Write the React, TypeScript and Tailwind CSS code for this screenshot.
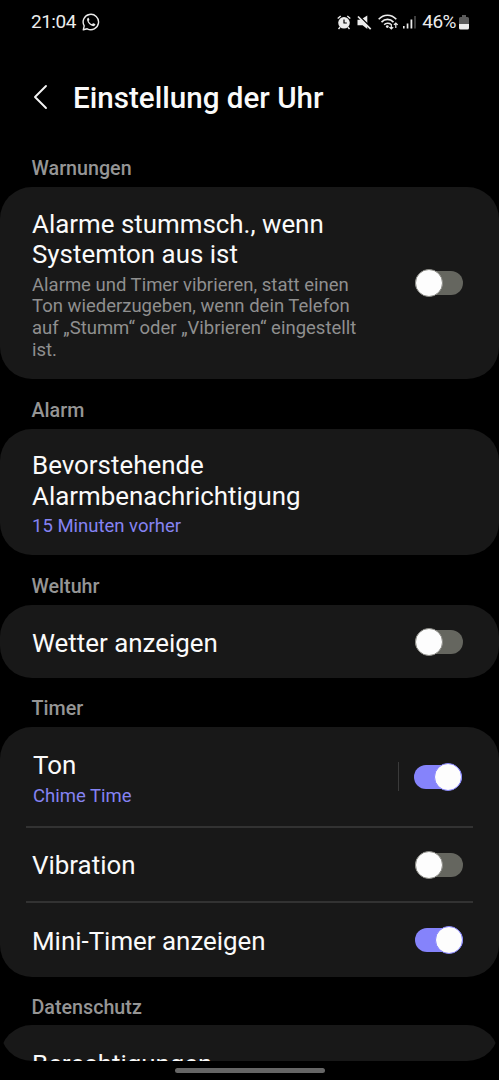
import React from 'react';

interface ToggleProps {
    on?: boolean;
}

const Toggle: React.FC<ToggleProps> = ({ on = false }) => (
    <div
        role="switch"
        aria-checked={on}
        className={`flex h-6 w-12 shrink-0 items-center rounded-full ${on ? 'justify-end bg-[#8583fb]' : 'bg-[#65665f]'}`}
    >
        <div
            className={`size-7 shrink-0 rounded-full border bg-[#fdfdfd] ${on ? 'border-[#8583fb]' : 'border-[#8b8b86]'}`}
        />
    </div>
);

interface SectionProps {
    title: string;
    gap?: string;
    children: React.ReactNode;
}

const Section: React.FC<SectionProps> = ({ title, gap = 'h-[50px]', children }) => (
    <section>
        <h2 className={`flex items-center pl-[31.5px] pt-[13px] text-[19.7px] leading-[24px] font-medium text-[#959595] ${gap}`}>
            {title}
        </h2>
        <div className="rounded-[32px] bg-[#181818]">{children}</div>
    </section>
);

const Title: React.FC<{ children: React.ReactNode }> = ({ children }) => (
    <p className="text-[25.9px] leading-[30.5px] text-[#fafafa]">{children}</p>
);

const StatusBar: React.FC = () => (
    <div className="flex h-[44px] items-center justify-between pl-[31px] pr-[30px] text-[19px] text-[#ececec]">
        <div className="flex items-center gap-[6px]">
            <span className="tracking-[-0.5px]">21:04</span>
            <svg width="18" height="18" viewBox="0 0 18 18" fill="none">
                <path d="M1.3 16.8 2.2 12.9A7.7 7.7 0 1 1 5.2 15.8Z" stroke="currentColor" strokeWidth="1.4" strokeLinejoin="round" />
                <path d="M6.1 4.8c-.9.5-1.2 1.5-.9 2.6.8 2.7 2.8 4.9 5.4 5.7 1.2.3 2.3-.2 2.7-1.3.1-.3 0-.5-.2-.7l-1.7-.9c-.3-.1-.5-.1-.7.2l-.6.8c-1.6-.6-2.9-1.8-3.5-3.3l.6-.7c.2-.2.2-.4.1-.7L6.7 5c-.1-.2-.3-.3-.6-.2Z" fill="currentColor" />
            </svg>
        </div>
        <div className="flex items-center">
            {/* alarm */}
            <svg width="14" height="15" viewBox="0 0 14 15" fill="none" stroke="currentColor">
                <circle cx="7" cy="7.8" r="5.8" fill="currentColor" stroke="none" />
                <path d="M.7 3.5 3.7 1M13.3 3.5 10.3 1M3 12.3 1.5 14M11 12.3l1.5 1.7" strokeWidth="1.4" />
                <path d="M7 4.4V8h2.8" stroke="#000" strokeWidth="1.2" />
            </svg>
            {/* sound off */}
            <svg className="ml-[6px]" width="15" height="15" viewBox="0 0 15 15">
                <path d="M.5 4.8h3L10.3.5v13.6L5.6 10.2H.5Z" fill="currentColor" />
                <path d="M2 .7 14.5 13.2" stroke="#000" strokeWidth="1.6" />
                <path d="M1 1.5 13.7 14.1" stroke="currentColor" strokeWidth="1.7" />
            </svg>
            {/* wifi with traffic arrows */}
            <svg className="ml-[6px]" width="21" height="16" viewBox="0 0 21 16" fill="none" stroke="currentColor" strokeWidth="1.6">
                <path d="M.7 5.3C5.6-.1 13.4-.1 18.3 5.3M3.5 8.1c3.4-3.6 8.6-3.6 12 0M6.2 10.8c1.7-1.8 4.8-2 6.7-.5" />
                <circle cx="9.3" cy="12.6" r="1.4" fill="currentColor" stroke="none" />
                <path d="M13.3 10v5M11.4 13.1l1.9 1.9 1.9-1.9M17.8 14V9M15.9 10.9 17.8 9l1.9 1.9" strokeWidth="1.2" />
            </svg>
            {/* signal strength */}
            <svg className="ml-[4px]" width="14" height="14" viewBox="0 0 14 14" fill="currentColor">
                <rect x="0" y="11" width="1.6" height="2.5" />
                <rect x="3.7" y="8.5" width="1.7" height="5" />
                <rect x="7.5" y="4.5" width="1.8" height="9" />
                <rect x="11.2" y="1" width="1.6" height="12.5" fill="#4c4c4c" />
            </svg>
            <span className="ml-[5px] tracking-[-0.5px]">46%</span>
            {/* battery */}
            <svg className="ml-[3px]" width="10" height="15" viewBox="0 0 10 15">
                <path d="M3 0h4v2h1.5Q10 2 10 3.5V9H0V3.5Q0 2 1.5 2H3Z" fill="#5b5b5b" />
                <path d="M0 9h10v4q0 1.5-1.5 1.5h-7Q0 14.5 0 13Z" fill="currentColor" />
            </svg>
        </div>
    </div>
);

const App: React.FC = () => (
    <div
        lang="de"
        className="flex h-[1080px] w-[499px] flex-col overflow-hidden bg-black font-['Roboto',sans-serif]"
    >
        <StatusBar />

        <header className="flex h-[93px] items-center pt-[13px] pl-[33px]">
            <svg width="15" height="26" viewBox="0 0 15 26" fill="none" stroke="#f4f4f4" strokeWidth="1.9" strokeLinecap="round" strokeLinejoin="round">
                <path d="M13 2 2 13 13 24" />
            </svg>
            <h1 className="ml-[25px] pt-[2px] text-[29.6px] font-medium text-[#fafafa]">Einstellung der Uhr</h1>
        </header>

        <main className="h-[924px] shrink-0 overflow-hidden rounded-b-[32px]">
            <Section title="Warnungen">
                <div className="flex h-[192px] items-center justify-between pl-8 pr-9">
                    <div className="w-[345px] pt-[4px]">
                        <Title>Alarme stummsch., wenn Systemton aus ist</Title>
                        <p className="mt-[5px] text-[18.5px] leading-[21.7px] text-[#8f8f8f]">
                            Alarme und Timer vibrieren, statt einen Ton wiederzugeben, wenn dein Telefon auf „Stumm“ oder „Vibrieren“ eingestellt ist.
                        </p>
                    </div>
                    <Toggle />
                </div>
            </Section>

            <Section title="Alarm">
                <div className="flex h-[126px] flex-col justify-center pt-[3px] pl-8">
                    <Title>
                        Bevorstehende
                        <br />
                        Alarmbenachrichtigung
                    </Title>
                    <p className="mt-[4px] text-[18.5px] leading-[22px] text-[#8583f3]">15 Minuten vorher</p>
                </div>
            </Section>

            <Section title="Weltuhr">
                <div className="flex h-[73px] items-center justify-between pl-8 pr-9">
                    <div className="pt-[3px]">
                        <Title>Wetter anzeigen</Title>
                    </div>
                    <Toggle />
                </div>
            </Section>

            <Section title="Timer" gap="h-[49px]">
                <div className="flex h-[99px] items-center justify-between pl-[33px] pr-[37px]">
                    <div className="pt-[4px]">
                        <Title>Ton</Title>
                        <p className="mt-[4px] text-[18.5px] leading-[22px] text-[#8583f3]">Chime Time</p>
                    </div>
                    <div className="flex items-center">
                        <div className="mr-[15px] h-[29px] w-px bg-[#3a3a3a]" />
                        <Toggle on />
                    </div>
                </div>
                <div className="mx-[26px] h-[2px] bg-[#323232]" />
                <div className="flex h-[73px] items-center justify-between pl-8 pr-9">
                    <div className="pt-[2px]">
                        <Title>Vibration</Title>
                    </div>
                    <Toggle />
                </div>
                <div className="mx-[26px] h-[2px] bg-[#323232]" />
                <div className="flex h-[74px] items-center justify-between pl-8 pr-9">
                    <div className="pt-[2px]">
                        <Title>Mini-Timer anzeigen</Title>
                    </div>
                    <Toggle on />
                </div>
            </Section>

            <Section title="Datenschutz" gap="h-[48px]">
                <div className="flex h-[73px] items-center pt-[5px] pl-8">
                    <Title>Berechtigungen</Title>
                </div>
            </Section>
        </main>

        <div className="mx-auto mt-[7px] h-[5px] w-[150px] shrink-0 rounded-full bg-[#666666]" />
    </div>
);

export default App;
